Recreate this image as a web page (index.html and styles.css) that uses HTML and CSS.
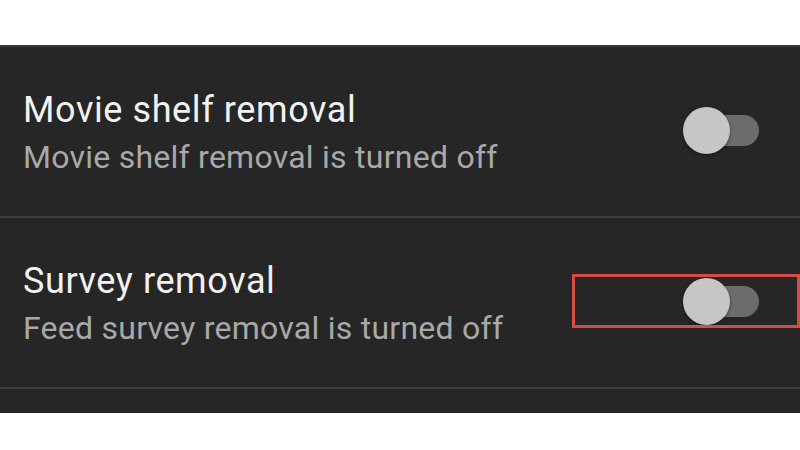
FILE: index.html
```html
<!DOCTYPE html>
<html>
<head>
<meta charset="utf-8">
<link rel="stylesheet" href="styles.css">
</head>
<body>
<div class="top-space"></div>
<div class="panel">
  <div class="row">
    <div class="texts">
      <div class="title">Movie shelf removal</div>
      <div class="sub">Movie shelf removal is turned off</div>
    </div>
    <div class="toggle"><div class="track"></div><div class="knob"></div></div>
  </div>
  <div class="row">
    <div class="texts">
      <div class="title">Survey removal</div>
      <div class="sub">Feed survey removal is turned off</div>
    </div>
    <div class="toggle"><div class="track"></div><div class="knob"></div></div>
    <div class="highlight"></div>
  </div>
  <div class="tail"></div>
</div>
</body>
</html>
```
FILE: styles.css
```css
html, body {
  margin: 0;
  padding: 0;
  background: #ffffff;
  width: 800px;
  height: 450px;
  overflow: hidden;
  font-family: Roboto, "Noto Sans", sans-serif;
}
.top-space {
  height: 45px;
}
.panel {
  background: #262626;
  border-top: 2px solid #3b3b3b;
}
.row {
  position: relative;
  height: 171px;
  box-sizing: border-box;
  border-bottom: 2px solid #3d3d3d;
  display: flex;
  align-items: flex-start;
  padding: 42px 41px 0 23px;
}
.texts {
  flex: 1;
}
.title {
  font-size: 36px;
  line-height: 42px;
  letter-spacing: 0.6px;
  color: #f2f2f2;
}
.sub {
  margin-top: 8px;
  font-size: 32px;
  line-height: 36px;
  letter-spacing: 0.25px;
  color: #a9a9a9;
}
.toggle {
  position: relative;
  width: 76px;
  height: 47px;
  margin-top: 18px;
}
.track {
  position: absolute;
  right: 0;
  top: 8px;
  width: 60px;
  height: 31px;
  border-radius: 16px;
  background: #6c6c6c;
}
.knob {
  position: absolute;
  left: 0;
  top: 0;
  width: 47px;
  height: 47px;
  border-radius: 50%;
  background: #c6c6c6;
  box-shadow: 0 1px 3px rgba(0, 0, 0, 0.5);
}
.highlight {
  position: absolute;
  left: 572px;
  top: 56px;
  width: 228px;
  height: 54px;
  box-sizing: border-box;
  border: 3px solid #d94b40;
}
.tail {
  height: 24px;
}
```
